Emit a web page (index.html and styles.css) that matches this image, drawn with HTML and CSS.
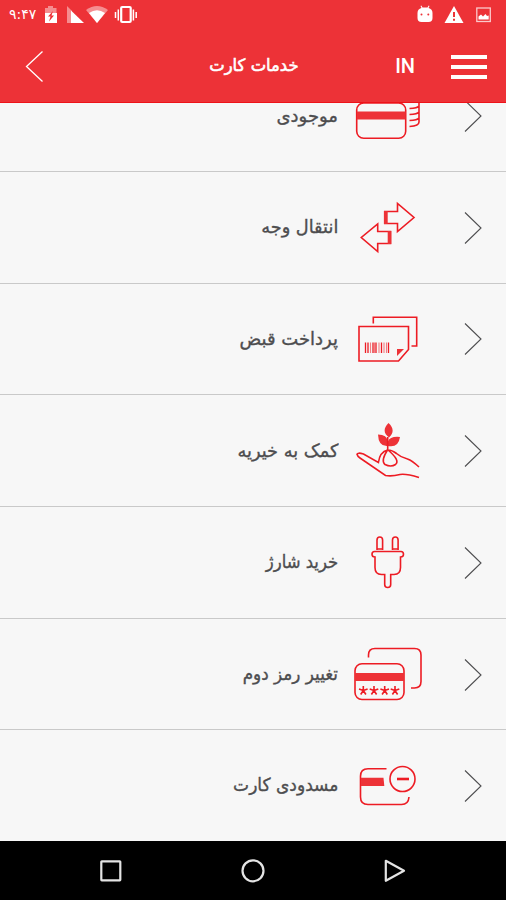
FILE: index.html
```
<!DOCTYPE html>
<html lang="fa">
<head>
<meta charset="utf-8">
<title>خدمات کارت</title>
<link rel="stylesheet" href="styles.css">
</head>
<body>
<div class="app">
  <header class="top">
    <div class="status">
      <span class="clock"><span class="fit fit-clock">۹:۴۷</span></span>
      <svg class="status-left" viewBox="40 0 100 30">
        <path fill="#f58d90" d="M48 6h5v2h3.500v5h-11.500v-5h3z"/><path fill="#fff" d="M45 13h12v10h-12z"/><path fill="#ed3237" d="M53 11l-5 5.500h2.500l-1.500 5 5-6h-2.500z"/>
        <path fill="#f58d90" d="M67 6v17h5v-12z"/><path fill="#fff" d="M71 10.500v12.500h13z"/>
        <path fill="#f58d90" d="M86 10q11-8 22 0l-11 13z"/><path fill="#fff" d="M89 13q8-5.500 16 0l-8 10z"/>
        <g fill="none" stroke="#fff"><rect x="121.200" y="7" width="9.500" height="15" rx="1" stroke-width="2.200"/><path stroke-width="1.500" d="M118.300 9.500v11M115.500 12v6M133.400 9.500v11M136.200 12v6"/></g>
      </svg>
      <svg class="status-right" viewBox="410 0 96 30">
        <path fill="#fff" d="M417.500 13q0-4 4-5l-1-2 .8-.5 1.200 2h5l1.200-2 .8.500-1 2q4 1 4 5v5q0 4-4 4h-7q-4 0-4-4z"/><g fill="#ed3237"><circle cx="421.500" cy="14.500" r="1"/><circle cx="428.300" cy="14.500" r="1"/></g>
        <path fill="#fff" d="M454 6l9.500 17h-19z"/><path stroke="#ed3237" stroke-width="2" d="M454 12v5M454 18.700v2"/>
        <rect x="476.800" y="8" width="13.500" height="13.500" fill="none" stroke="#fbc9cb" stroke-width="1.300"/><path fill="#fff" d="M478.500 19.500v-3l2.500-2 2 2 2.500-2.500 1.500 2 1.700-.5v4z"/>
      </svg>
    </div>
    <div class="bar">
      <svg class="back" viewBox="20 46 30 40"><path d="M42.500 51.500L26.500 66.500l16 15" fill="none" stroke="#fff" stroke-width="1.300"/></svg>
      <h1 class="title"><span class="fit fit-title">خدمات کارت</span></h1>
      <span class="lang">IN</span>
      <span class="menu"><i></i><i></i><i></i></span>
    </div>
  </header>
  <main class="viewport">
    <ul class="list">
      <li class="row"><span class="label"><span class="fit fit-1">موجودی</span></span>
        <svg class="icon" viewBox="350 60 80 112"><rect x="356.700" y="103" width="49" height="35.300" rx="7"/><path class="solid" d="M357 111.500h48.500v8H357z"/><path d="M419 98v24q0 4-9.500 4.500M409.500 108.500q8-.2 9.500-2.500M409.500 114.500q8-.2 9.500-2.500M409.500 120.500q8-.2 9.500-2.500"/></svg>
        <svg class="chevron" viewBox="0 0 20 34"><path d="M2 1.500L18 17 2 32.500"/></svg></li>
      <li class="row"><span class="label"><span class="fit fit-2">انتقال وجه</span></span>
        <svg class="icon" viewBox="350 172 80 111"><path d="M384.700 211.500H397.500V203.500L414 217.500 397.500 231.500V223.500H384.700zM390.500 231.500H377.700V224L361.300 237.500 377.700 251.500V243.500H390.500z"/><path class="solid" d="M384 211h3.700v13H384zM387.700 231h3.600v13h-3.600z"/></svg>
        <svg class="chevron" viewBox="0 0 20 34"><path d="M2 1.500L18 17 2 32.500"/></svg></li>
      <li class="row"><span class="label"><span class="fit fit-3">پرداخت قبض</span></span>
        <svg class="icon" viewBox="350 283 80 112"><path d="M373.300 323.500v-6.300h43.400v28.800h-5.200M359 326.500h49.500v23L398.500 361H359z"/><path class="solid" d="M397 349h7l-7 7z"/><path stroke-width="1.300" d="M365.500 342.500v10.500M368 342.500v10.500M373 342.500v10.500M376 342.500v10.500M381.500 342.500v10.500M388.500 342.500v10.500"/><path stroke-width="1.100" opacity=".55" d="M370.500 342.500v10.500M374.500 342.500v10.500M379 342.500v10.500M384 342.500v10.500M386.500 342.500v10.500"/></svg>
        <svg class="chevron" viewBox="0 0 20 34"><path d="M2 1.500L18 17 2 32.500"/></svg></li>
      <li class="row"><span class="label"><span class="fit fit-4">کمک به خیریه</span></span>
        <svg class="icon" viewBox="350 395 80 112"><path class="solid" d="M388.500 423q8 7.500 .5 14.500-8.500-6.500-.5-14.500zM388 446q-9.500 1-10-11.500 9 0 10 7 2-5.500 12-4.500-1.500 11-12 9z"/><path d="M387.700 437v13M387.700 450q-8 2-9.300 12.500L363.500 454q-6-1.800-6.500.3.500 2 3 3.700L385.500 475.500Q392 476.500 400 474.500 406 473.500 419 477.500M388 450Q392 450 396.500 453.500 401 457.500 407.500 459 412 460.500 419 467M387.500 450q-7 11-2.500 14.500 6 3 10.500 0 5-4-7.500-14.500"/></svg>
        <svg class="chevron" viewBox="0 0 20 34"><path d="M2 1.500L18 17 2 32.500"/></svg></li>
      <li class="row"><span class="label"><span class="fit fit-5">خرید شارژ</span></span>
        <svg class="icon" viewBox="350 507 80 111"><path d="M377 550v-10q0-3 2.800-3t2.800 3v10M392.500 550v-10q0-3 2.800-3t2.800 3v10M377 549h6M392.500 549h6M374.500 551.500H401q2.500 0 2.500 2.700t-3 2.800v10.500q0 7-6.500 7H390.700v10q0 3-3 3t-3-3v-10H381.500q-6.500 0-6.500-7V557q-3-.1-3-2.800t2.500-2.700z"/></svg>
        <svg class="chevron" viewBox="0 0 20 34"><path d="M2 1.500L18 17 2 32.500"/></svg></li>
      <li class="row"><span class="label"><span class="fit fit-6">تغییر رمز دوم</span></span>
        <svg class="icon" viewBox="350 618 80 112"><path d="M368.500 657.500v-2.500q0-6.500 6.500-6.500H414.500q6.500 0 6.500 6.500V681.500q0 6.500-6.500 6.500H411"/><rect x="355" y="663.700" width="49" height="35.800" rx="7"/><path class="solid" d="M355 673h49v8H355z"/><path stroke-width="1.600" d="M363.300 690.500v-4.500M363.300 690.500l4.300-1.500M363.300 690.500l-4.300-1.500M363.300 690.500l2.600 4M363.300 690.500l-2.600 4M374 690.500v-4.500M374 690.500l4.300-1.500M374 690.500l-4.300-1.500M374 690.500l2.600 4M374 690.500l-2.600 4M384.700 690.500v-4.500M384.700 690.500l4.300-1.500M384.700 690.500l-4.300-1.500M384.700 690.500l2.600 4M384.700 690.500l-2.600 4M395 690.500v-4.500M395 690.500l4.300-1.500M395 690.500l-4.300-1.500M395 690.500l2.600 4M395 690.500l-2.600 4"/></svg>
        <svg class="chevron" viewBox="0 0 20 34"><path d="M2 1.500L18 17 2 32.500"/></svg></li>
      <li class="row"><span class="label"><span class="fit fit-7">مسدودی کارت</span></span>
        <svg class="icon" viewBox="350 730 80 111"><path d="M386.500 768.700H368q-7.500 0-7.500 7.500V797q0 7.500 7.500 7.500H401.500q7 0 7.500-7.500"/><path class="solid" d="M361 777.700h22.500l.8 8.300H361z"/><circle cx="402.500" cy="779" r="12.500"/><path stroke-width="2.600" d="M397 779h12"/></svg>
        <svg class="chevron" viewBox="0 0 20 34"><path d="M2 1.500L18 17 2 32.500"/></svg></li>
    </ul>
  </main>
  <nav class="nav">
    <svg viewBox="0 0 30 30"><rect x="5.300" y="5.300" width="19" height="19" rx=".5"/></svg>
    <svg viewBox="0 0 30 30"><circle cx="15" cy="14.800" r="10.500"/></svg>
    <svg viewBox="0 0 30 30"><path d="M5.800 4.800v20L24 14.800z"/></svg>
  </nav>
</div>
</body>
</html>
```
FILE: styles.css
```
* { box-sizing: border-box; }
body { margin: 0; font-family: "DejaVu Sans", sans-serif; background: #f7f7f7; }
.app { width: 506px; height: 900px; display: flex; flex-direction: column; overflow: hidden; }
svg { display: block; flex: none; }

.top { height: 103px; background: #ed3237; border-bottom: 1px solid #ee1219; color: #fff; flex: none; }
.status { height: 30px; display: flex; }
.clock { width: 40px; padding-left: 9px; font-size: 14px; line-height: 28px; direction: ltr; }
.status-left { width: 100px; height: 30px; }
.status-right { width: 96px; height: 30px; margin-left: auto; }
.bar { height: 72px; display: grid; grid-template-columns: 30px 249px 1fr 36px; padding: 0 18px 0 20px; align-items: center; }
.back { width: 30px; height: 40px; }
.title { margin: 0; font-size: 17px; font-weight: normal; -webkit-text-stroke: .6px #fff; line-height: 30px; text-align: right; direction: rtl; position: relative; top: -1px; }
.lang { font: 500 20px/30px Roboto, sans-serif; text-align: right; padding-right: 37px; }
.menu { display: flex; flex-direction: column; gap: 6px; padding-top: 1px; margin-left: -1px; margin-right: 1px; }
.menu i { height: 4px; background: #fff; }

.viewport { height: 738px; overflow: hidden; flex: none; }
.list { list-style: none; margin: -43px 0 0; padding: 0; display: grid; grid-template-rows: 112px 112px 111px 112px 112px 111px 111px; }
.row { display: grid; grid-template-columns: 338px 80px 20px; column-gap: 12px; align-items: center; border-bottom: 1px solid #c9c9c9; }
.row:last-child { border-bottom: 0; }
.label { text-align: right; direction: rtl; font-size: 18px; line-height: 30px; color: #4d4d4f; white-space: nowrap; -webkit-text-stroke: .35px #4d4d4f; padding-bottom: 1px; }
.fit { display: inline-block; transform-origin: 100% 50%; }
.fit-title { transform: scaleX(.965); }
.fit-2, .fit-4 { transform: scaleX(.985); }
.fit-5 { transform: scaleX(.915); }
.fit-6 { transform: scaleX(.935); }
.fit-7 { transform: scaleX(.945); }
.icon { width: 80px; height: 112px; align-self: start; fill: none; stroke: #ed1c24; stroke-width: 1.600; }
.row:nth-child(2) .icon, .row:nth-child(5) .icon, .row:nth-child(7) .icon { height: 111px; }
.row:nth-child(3) .icon, .row:nth-child(6) .icon { margin-top: -1px; }
.row:nth-child(3) .icon { margin-bottom: -1px; }
.icon .solid { fill: #ed3237; stroke: none; }
.chevron { width: 20px; height: 34px; margin-left: 21px; fill: none; stroke: #4d4d4f; stroke-width: 1.100; }

.nav { height: 59px; background: #000; display: flex; justify-content: center; gap: 112px; align-items: center; flex: none; }
.nav svg { width: 30px; height: 30px; fill: none; stroke: #e4e4e4; stroke-width: 2.200; stroke-linejoin: round; }
```
